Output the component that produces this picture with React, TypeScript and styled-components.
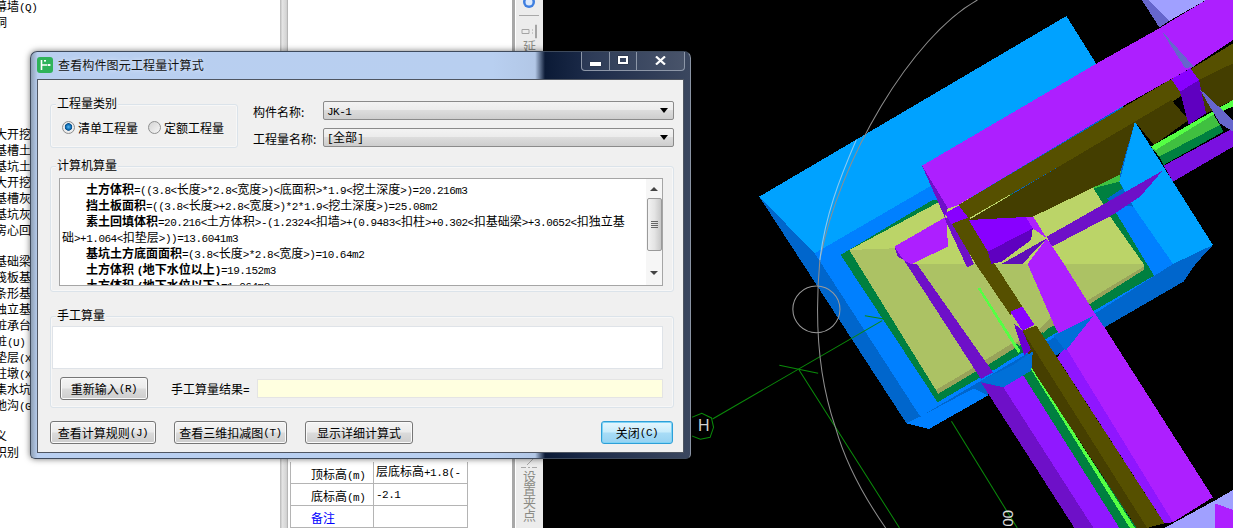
import React from "react";
import styled, { createGlobalStyle } from "styled-components";

const Global = createGlobalStyle`
  html, body { margin: 0; padding: 0; background: #000; overflow: hidden; }
  * { box-sizing: border-box; }
`;

const Page = styled.div`
  position: relative; width: 1233px; height: 528px; display: flex; overflow: hidden; background: #000;
  font-family: "Noto Sans CJK SC", "Liberation Sans", sans-serif; font-size: 12px; color: #000;
`;
const TreePanel = styled.div`
  width: 280px; height: 528px; background: #fff; overflow: hidden; line-height: 16px;
`;
const TreeRow = styled.div<{ $gap?: number }>`
  height: 16px; margin-left: -5px; margin-top: ${p => p.$gap ?? 0}px; white-space: nowrap;
`;
const Splitter = styled.div`
  width: 8px; height: 528px; background: linear-gradient(90deg, #b8b8b8, #e4e4e4 30%, #d4d4d4 80%, #a8a8a8);
`;
const PropPanel = styled.div`
  width: 224px; height: 528px; background: #fff; padding: 462px 0 0 2px; overflow: hidden;
`;
const PropTable = styled.div`
  width: 178px; display: grid; grid-template-columns: 83px 94px; border-left: 1px solid #b4b4b4; border-right: 1px solid #b4b4b4;
`;
const PropName = styled.div<{ $blue?: boolean }>`
  height: 22px; padding: 4px 0 0 20px; border-bottom: 1px solid #b4b4b4; border-right: 1px solid #b4b4b4; white-space: nowrap;
  color: ${p => (p.$blue ? "#0000ff" : "#000")}; line-height: 16px;
`;
const PropValue = styled.div`
  height: 22px; padding: 1px 0 0 2px; border-bottom: 1px solid #b4b4b4; white-space: nowrap; overflow: hidden; line-height: 16px;
`;
const ToolStrip = styled.div`
  width: 31px; height: 528px; background: linear-gradient(90deg, #a8a8a8 0 3px, #fff 3px 4px, #ececec 4px 100%);
  display: flex; flex-direction: column; align-items: center; padding-left: 3px;
`;
const ToolSep = styled.div`
  width: 20px; height: 1px; background: #a8a8a8; margin-top: 5px; margin-bottom: 8px;
`;
const ToolText = styled.div<{ $top?: number }>`
  writing-mode: vertical-rl; color: #8b8b85; font-size: 13px; line-height: 14px; margin-top: ${p => p.$top ?? 0}px;
`;
const Canvas = styled.div`
  flex: 1; height: 528px; background: #000; overflow: hidden;
`;
const CanvasSvg = styled.svg`
  display: block; width: 690px; height: 528px;
`;

const Dialog = styled.div`
  position: absolute; left: 30px; top: 51px; width: 661px; height: 408px; border-radius: 7px 7px 5px 5px;
  border: 1px solid #3e4a5c; border-right-color: #8a94a4;
  background: linear-gradient(90deg, #8fa0b5 0, #b9cff0 1%, #b8cff0 70%, #b2c7e6 76.5%, #0b1a36 78%, #1d2c4a 85%, #3b475f 100%);
  box-shadow: 0 0 6px rgba(0,0,0,.55);
  padding: 0 6px 5px 6px; display: flex; flex-direction: column;
`;
const TitleBar = styled.div`
  height: 27px; display: flex; align-items: flex-start; flex: none;
`;
const TitleIcon = styled.svg`
  width: 16px; height: 16px; margin-top: 5px; flex: none;
`;
const TitleText = styled.div`
  margin: 4px 0 0 5px; line-height: 18px; letter-spacing: .15px; color: #111; text-shadow: 0 0 4px #e8f0ff; white-space: nowrap;
`;
const Caption = styled.div`
  margin-left: auto; margin-right: -1px; display: flex; height: 19px; border: 1px solid #8d97a8; border-top: none; border-radius: 0 0 4px 4px; background: rgba(255,255,255,.08);
`;
const CapBtn = styled.div<{ $w: number; $last?: boolean }>`
  width: ${p => p.$w}px; display: flex; align-items: center; justify-content: center;
  border-right: ${p => (p.$last ? "none" : "1px solid #8d97a8")};
`;
const MinGlyph = styled.div`
  width: 11px; height: 4px; background: #fff; margin-top: 5px; box-shadow: 0 0 1px #000;
`;
const MaxGlyph = styled.div`
  width: 10px; height: 8px; border: 2px solid #fff; margin-top: -2px; box-shadow: 0 0 1px #000;
`;
const CloseGlyph = styled.svg`
  width: 11px; height: 9px; margin-top: -1px;
`;
const Client = styled.div`
  flex: 1; background: #f0f0f0; border: 1px solid #4f5662; padding: 21px 9px 0 12px; display: flex; flex-direction: column;
`;
const TopRow = styled.div`
  display: flex; height: 47px; flex: none;
`;
const TypeGroup = styled.div`
  position: relative; width: 188px; height: 44px; margin-top: 3px; border: 1px solid #dbe3ea; border-radius: 3px;
  display: flex; align-items: center; padding: 3px 0 0 11px; box-shadow: inset 0 0 0 1px #f7f7f7;
`;
const Legend = styled.div`
  position: absolute; left: 5px; top: -10px; background: #f0f0f0; padding: 0 1px; line-height: 16px; white-space: nowrap;
`;
const Radio = styled.span<{ $on?: boolean }>`
  width: 13px; height: 13px; border-radius: 50%; flex: none; border: 1px solid #8e8f8f;
  background: ${p => p.$on
    ? "radial-gradient(circle at 50% 45%, #58b6f0 0, #0f6fb5 30%, #0c4f88 42%, #f0f0f0 50%, #dedede 100%)"
    : "linear-gradient(135deg, #d4d4d4, #f6f6f6)"};
`;
const RadioLabel = styled.span<{ $w: number }>`
  width: ${p => p.$w}px; margin-left: 3px; white-space: nowrap; line-height: 16px;
`;
const FieldCol = styled.div`
  margin-left: 15px; display: flex; flex-direction: column; gap: 8px;
`;
const FieldRow = styled.div`
  display: flex; align-items: center; height: 19px; width: 421px;
`;
const FieldLabel = styled.div`
  width: 70px; white-space: nowrap; margin-top: 2px;
`;
const Select = styled.div`
  width: 351px; height: 19px; border: 1px solid #8a8a8a; border-radius: 2px; padding-left: 3px; line-height: 17px;
  display: flex; justify-content: space-between; align-items: center;
  background: linear-gradient(180deg, #f3f3f3 0, #ececec 45%, #dcdcdc 50%, #cdcdcd 100%);
`;
const Arrow = styled.span`
  width: 0; height: 0; border-left: 4px solid transparent; border-right: 4px solid transparent; border-top: 5px solid #000; margin-right: 5px;
`;
const Group = styled.div<{ $h: number; $top: number; $px: number; $pt: number }>`
  position: relative; width: 624px; height: ${p => p.$h}px; margin-top: ${p => p.$top}px; flex: none;
  border: 1px solid #dbe3ea; border-radius: 3px; padding: ${p => p.$pt}px 10px 0 ${p => p.$px}px; box-shadow: inset 0 0 0 1px #f7f7f7;
`;
const Formula = styled.div`
  position: relative; width: 604px; height: 108px; background: #fff; border: 1px solid #a5a5a5; overflow: hidden; line-height: 16px;
  padding: 2px 0 0 2px;
`;
const FLine = styled.div<{ $indent?: boolean }>`
  height: 16px; white-space: nowrap; padding-left: ${p => (p.$indent ? 24 : 0)}px;
`;
const Strong = styled.span`
  font-weight: 700;
`;
const Lat = styled.span`
  font-family: "Liberation Mono", monospace; font-size: 11px; letter-spacing: -0.5px;
`;
const Bar = styled.div`
  position: absolute; right: 0; top: 0; bottom: 0; width: 16px; background: #f6f6f6; display: flex; flex-direction: column; align-items: center;
`;
const BarUp = styled.span`
  margin-top: 8px; width: 0; height: 0; border-left: 4px solid transparent; border-right: 4px solid transparent; border-bottom: 4px solid #444;
`;
const BarDown = styled.span`
  margin-top: 20px; width: 0; height: 0; border-left: 4px solid transparent; border-right: 4px solid transparent; border-top: 4px solid #444;
`;
const Thumb = styled.div`
  width: 15px; height: 53px; margin-top: 7px; border: 1px solid #9a9a9a; border-radius: 2px; display: flex; flex-direction: column; align-items: center; justify-content: center; gap: 1px;
  background: linear-gradient(90deg, #f2f2f2, #e4e4e4 50%, #c8c8c8);
`;
const Grip = styled.span`
  width: 7px; height: 1px; background: #666;
`;
const ManualBox = styled.div`
  width: 611px; height: 43px; background: #fff; border: 1px solid #dfe3e8;
`;
const ManualRow = styled.div`
  display: flex; align-items: center; margin: 8px 0 0 8px;
`;
const Btn = styled.div<{ $w: number; $primary?: boolean; $ml?: number }>`
  width: ${p => p.$w}px; height: 23px; flex: none; margin-left: ${p => p.$ml ?? 0}px; border-radius: 3px;
  display: flex; align-items: center; justify-content: center; white-space: nowrap; line-height: 16px;
  border: 1px solid ${p => (p.$primary ? "#2e9fd8" : "#767676")};
  background: ${p => p.$primary
    ? "linear-gradient(180deg, #e6f6fd 0, #c8ecfb 48%, #a8dcf6 52%, #96d2f2 100%)"
    : "linear-gradient(180deg, #f4f4f4 0, #ebebeb 48%, #dbdbdb 52%, #cdcdcd 100%)"};
  box-shadow: inset 0 0 0 1px ${p => (p.$primary ? "#7fd3f5" : "#fafafa")};
`;
const ResultLabel = styled.div`
  margin-left: 23px; width: 86px; white-space: nowrap;
`;
const ResultInput = styled.div`
  width: 406px; height: 19px; background: #ffffe0; border: 1px solid #e4e4e4;
`;
const BottomRow = styled.div`
  display: flex; margin-top: 13px; flex: none;
`;

const Mixed = ({ text }: { text: string }) => (
  <>
    {text.split(/([\x00-\x7f]+)/).filter(Boolean).map((s, i) =>
      /^[\x00-\x7f]+$/.test(s) ? <Lat key={i}>{s}</Lat> : <React.Fragment key={i}>{s}</React.Fragment>
    )}
  </>
);

const tree: [string, number][] = [
  ["幕墙(Q)", -2], ["洞", 0],
  ["大开挖", 96], ["基槽土", 0], ["基坑土", 0], ["大开挖", 0], ["基槽灰", 0], ["基坑灰", 0], ["房心回", 0],
  ["基础梁", 15], ["筏板基", 0], ["条形基", 0], ["独立基", 0], ["桩承台", 0], ["桩(U)", 0], ["垫层(X)", 0], ["柱墩(X)", 0], ["集水坑", 0], ["地沟(G)", 0],
  ["义", 15], ["识别", 0],
];

const O = 792;
const shapes: [string, string][] = [
  ["#0066cc", `200,590 1087,48 1250,320 1285,365 1510,735 1460,${O} 1425,${O + 53} 690,${O + 495} 625,${O + 478}`],
  ["#0080ff", `360,760 700,555 1280,620 1395,${O} 1170,${O + 148} 665,${O + 458}`],
  ["#0080ff", `625,${O + 478} 690,${O + 495} 860,${O + 395} 820,${O + 373} 665,${O + 458}`],
  ["#00a2ff", `200,590 1087,48 1250,320 1180,360 700,555 360,760`],
  ["#00a2ff", `1285,365 1510,735 1395,${O} 1280,620 1240,545`],
  ["#008040", `435,765 715,${O + 415} 1340,${O + 35} 1205,595 1250,565 1240,545 1165,565 700,600`],
  ["#40c040", `1000,648 1245,505 1240,545 1165,565 1020,640`],
  ["#55ff44", `990,650 1245,495 1245,505 1000,652`],
  ["#bbd468", `460,750 730,600 1165,565 1195,615 1210,645 1310,${O} 1310,${O + 8} 1150,${O + 108} 710,${O + 378}`],
  ["#acc264", `460,750 590,745 640,${O} 1310,${O} 1310,${O + 8} 1150,${O + 108} 710,${O + 378}`],
  ["#98a35a", `710,${O + 378} 716,${O + 390} 1150,${O + 123} 1310,${O + 18} 1310,${O + 8} 1150,${O + 108}`],
  ["#008040", `845,${O + 298} 945,${O + 238} 960,${O + 262} 880,${O + 318}`],
  ["#98a35a", `850,${O + 290} 860,${O + 303} 945,${O + 248} 935,${O + 235}`],
  ["#98a35a", `1010,${O + 193} 1020,${O + 208} 1050,${O + 173} 1050,${O + 155}`],
  ["#55ff44", `830,${O + 72} 838,${O + 72} 955,${O + 262} 948,${O + 268}`],
  ["#6e10c8", `625,${O} 655,${O} 875,${O + 325} 840,${O + 345}`],
  ["#ad1fff", `590,740 740,650 745,740 640,${O} 625,${O}`],
  ["#6e10c8", `590,740 625,${O} 650,${O + 8} 600,770`],
  ["#6e10c8", `735,655 760,650 820,${O} 800,${O + 10}`],
  ["#565000", `755,670 805,650 880,${O} 960,${O + 128} 925,${O + 153} 825,${O}`],
  ["#8800ff", `735,640 785,612 810,650 755,672`],
  ["#8800ff", `805,660 935,592 990,685 860,755`],
  ["#5f00c0", `860,755 990,685 985,720 900,785 870,${O}`],
  ["#ad1fff", `935,592 945,572 1030,715 990,685`],
  ["#6e10c8", `1030,710 1365,512 1300,590 1220,645 1045,740`],
  ["#5f10b8", `900,${O} 1030,715 960,${O}`],
  ["#6e10c8", `840,${O + 355} 905,${O + 370} 1165,${O + 792} 1110,${O + 792}`],
  ["#9018ff", `905,${O + 370} 985,${O + 320} 1240,${O + 792} 1165,${O + 792}`],
  ["#008040", `960,${O + 330} 985,${O + 313} 1290,${O + 792} 1240,${O + 792}`],
  ["#55ff44", `980,${O + 308} 990,${O + 313} 1285,${O + 792} 1270,${O + 792}`],
  ["#463f00", `960,${O + 200} 990,${O + 318} 1290,${O + 792} 1320,${O + 792}`],
  ["#565000", `960,${O + 200} 1000,${O + 185} 1370,${O + 778} 1320,${O + 792}`],
  ["#8f16ff", `1060,${O + 280} 1085,${O + 250} 1395,${O + 775} 1370,${O + 778}`],
  ["#ad1fff", `975,${O} 1030,715 1080,${O} 1170,${O + 150} 1200,${O + 195} 1510,${O + 700} 1395,${O + 775} 1085,${O + 250} 1050,${O + 180}`],
  ["#0070d8", `835,${O + 352} 905,${O + 370} 985,${O + 320} 990,${O + 262} 930,${O + 305}`],
  ["#0070d8", `1050,${O + 215} 1085,${O + 260} 1165,${O + 155}`],
  ["#8800ff", `925,${O + 143} 960,${O + 128} 995,${O + 183} 960,${O + 200}`],
  ["#6a00d0", `935,${O + 178} 965,${O + 273} 985,${O + 258} 960,${O + 200}`],
  ["#ad1fff", `670,497 1175,190 1355,85 1490,0 1568,0 1568,120 1445,205 1385,240 1250,318 775,615 745,625`],
  ["#6e10c8", `670,497 745,625 735,650`],
  ["#565000", `775,615 1385,240 1450,205 1568,130 1568,190 1480,245 1400,300 805,655`],
  ["#443e00", `805,660 1390,300 1440,360 1340,435 1285,365 1250,490 1240,525 990,650`],
  ["#443e00", `1470,240 1568,190 1568,300 1490,340`],
  ["#8800ff", `1390,238 1445,205 1470,240 1415,275`],
  ["#5f00c0", `1415,275 1470,240 1490,340 1440,375`],
  ["#40c040", `1335,445 1510,340 1530,375 1355,470`],
  ["#55ff44", `1330,440 1500,340 1568,300 1568,320 1510,345 1345,450`],
  ["#008040", `1355,470 1530,375 1540,395 1368,495`],
  ["#7a10e0", `1368,497 1568,385 1568,440 1395,545`],
  ["#6666cc", `1360,90 1455,200 1430,205`],
  ["#6666cc", `1470,265 1568,360 1568,395 1530,370`],
  ["#6666cc", `1305,0 1325,0 1385,62 1355,82`],
  ["#a0a0ff", `1325,0 1490,0 1385,62`],
  ["#a0a0ff", `1370,${O + 792} 1515,${O + 710} 1568,${O + 678} 1568,${O + 792}`],
  ["#ad1fff", `1515,${O + 718} 1568,${O + 738} 1568,${O + 792} 1515,${O + 792}`],
];

const lines = (
  <g fill="none">
    <path d={`M65 ${O + 465} L555 ${O + 170}`} stroke="#0a8a0a" strokeWidth="3" />
    <path d={`M258 ${O + 304} L370 ${O + 328} M505 ${O + 155} L560 ${O + 165} M315 ${O + 318} L605 ${O + 792}`} stroke="#0a8a0a" strokeWidth="3" />
    <path d={`M755 ${O + 472} L945 ${O + 792}`} stroke="#0a8a0a" strokeWidth="3" />
    <path d={`M6 ${O + 460} L34 ${O + 448} L62 ${O + 462} L68 ${O + 490} L58 ${O + 520} L30 ${O + 526} L6 ${O + 516}`} stroke="#0a8a0a" strokeWidth="3" />
    <ellipse cx="365" cy={O + 136} rx="68" ry="70" stroke="#9a9a9a" strokeWidth="3" />
    <path d={`M830 0 C 640 110 430 480 375 ${O - 12} C 360 ${O + 160} 370 ${O + 340} 420 ${O + 490} C 450 ${O + 600} 510 ${O + 710} 565 ${O + 792}`} stroke="#8e8e8e" strokeWidth="3" />
    <path d={`M480 420 C 430 540 390 650 375 ${O - 12}`} stroke="#8cc8f0" strokeWidth="3" />
  </g>
);

export default function App() {
  return (
    <Page>
      <Global />
      <TreePanel>
        {tree.map(([t, g], i) => (
          <TreeRow key={i} $gap={g}><Mixed text={t} /></TreeRow>
        ))}
      </TreePanel>
      <Splitter />
      <PropPanel>
        <PropTable>
          <PropName><Mixed text="顶标高(m)" /></PropName>
          <PropValue><Mixed text="层底标高+1.8(-" /></PropValue>
          <PropName><Mixed text="底标高(m)" /></PropName>
          <PropValue><Mixed text="-2.1" /></PropValue>
          <PropName $blue>备注</PropName>
          <PropValue />
        </PropTable>
      </PropPanel>
      <ToolStrip>
        <svg width="14" height="10" viewBox="0 0 14 10">
          <circle cx="7" cy="2" r="6" fill="#3f7fe0" />
          <circle cx="7" cy="2" r="3.5" fill="#dce9fb" />
        </svg>
        <ToolSep />
        <svg width="16" height="15" viewBox="0 0 16 15" fill="none" stroke="#a4a4a4">
          <path d="M1 5.5H8V9.5H1ZM11 6H12M11 9H12M14.5 1H15.5V14H14.5Z" />
        </svg>
        <ToolText $top={1}>延</ToolText>
        <svg width="18" height="12" viewBox="0 0 18 12" style={{ marginTop: 404 }} fill="none" stroke="#a8a8a8">
          <path d="M7 8L14 1M1 10.5H6M8 10.5H10M12 10.5H17" />
        </svg>
        <ToolText $top={1}>设置夹点</ToolText>
      </ToolStrip>
      <Canvas>
        <CanvasSvg viewBox="0 0 690 528" shapeRendering="crispEdges">
          <g transform="translate(147,0) scale(0.3463,0.3333)">
            {shapes.map(([c, p], i) => <polygon key={i} fill={c} points={p} />)}
            {lines}
          </g>
          <text x="155" y="431" fill="#d0d0d0" fontFamily="Liberation Sans, sans-serif" fontSize="16" shapeRendering="auto">H</text>
          <text transform="translate(460,510) rotate(90)" fill="#e0e0e0" fontFamily="Liberation Sans, sans-serif" fontSize="15">00</text>
        </CanvasSvg>
      </Canvas>

      <Dialog>
        <TitleBar>
          <TitleIcon viewBox="0 0 16 16">
            <rect width="16" height="16" rx="3" fill="#2fb35a" />
            <path d="M4.5 3V13M4.5 8H10.5" stroke="#fff" strokeWidth="1.6" fill="none" />
            <rect x="11" y="7" width="2.4" height="2" fill="#fff" />
            <rect x="7" y="3" width="2" height="1.6" fill="#fff" />
          </TitleIcon>
          <TitleText>查看构件图元工程量计算式</TitleText>
          <Caption>
            <CapBtn $w={28}><MinGlyph /></CapBtn>
            <CapBtn $w={27}><MaxGlyph /></CapBtn>
            <CapBtn $w={47} $last>
              <CloseGlyph viewBox="0 0 11 9"><path d="M1 0.5L10 8.5M10 0.5L1 8.5" stroke="#fff" strokeWidth="2.2" /></CloseGlyph>
            </CapBtn>
          </Caption>
        </TitleBar>
        <Client>
          <TopRow>
            <TypeGroup>
              <Legend>工程量类别</Legend>
              <Radio $on />
              <RadioLabel $w={70}>清单工程量</RadioLabel>
              <Radio />
              <RadioLabel $w={62}>定额工程量</RadioLabel>
            </TypeGroup>
            <FieldCol>
              <FieldRow>
                <FieldLabel>构件名称:</FieldLabel>
                <Select><span><Mixed text="JK-1" /></span><Arrow /></Select>
              </FieldRow>
              <FieldRow>
                <FieldLabel>工程量名称:</FieldLabel>
                <Select><span><Mixed text="[" />全部<Mixed text="]" /></span><Arrow /></Select>
              </FieldRow>
            </FieldCol>
          </TopRow>

          <Group $h={126} $top={18} $px={8} $pt={11}>
            <Legend>计算机算量</Legend>
            <Formula>
              <FLine $indent><Strong>土方体积</Strong><Mixed text="=((3.8<长度>*2.8<宽度>)<底面积>*1.9<挖土深度>)=20.216m3" /></FLine>
              <FLine $indent><Strong>挡土板面积</Strong><Mixed text="=((3.8<长度>+2.8<宽度>)*2*1.9<挖土深度>)=25.08m2" /></FLine>
              <FLine $indent><Strong>素土回填体积</Strong><Mixed text="=20.216<土方体积>-(1.2324<扣墙>+(0.9483<扣柱>+0.302<扣基础梁>+3.0652<扣独立基" /></FLine>
              <FLine><Mixed text="础>+1.064<扣垫层>))=13.6041m3" /></FLine>
              <FLine $indent><Strong>基坑土方底面面积</Strong><Mixed text="=(3.8<长度>*2.8<宽度>)=10.64m2" /></FLine>
              <FLine $indent><Strong>土方体积 <Mixed text="(" />地下水位以上<Mixed text=")" /></Strong><Mixed text="=19.152m3" /></FLine>
              <FLine $indent><Strong>土方体积 <Mixed text="(" />地下水位以下<Mixed text=")" /></Strong><Mixed text="=1.064m3" /></FLine>
              <Bar>
                <BarUp />
                <Thumb><Grip /><Grip /><Grip /><Grip /></Thumb>
                <BarDown />
              </Bar>
            </Formula>
          </Group>

          <Group $h={92} $top={24} $px={1} $pt={9}>
            <Legend>手工算量</Legend>
            <ManualBox />
            <ManualRow>
              <Btn $w={88}>重新输入<Mixed text=" (R)" /></Btn>
              <ResultLabel>手工算量结果<Mixed text="=" /></ResultLabel>
              <ResultInput />
            </ManualRow>
          </Group>

          <BottomRow>
            <Btn $w={106}>查看计算规则<Mixed text=" (J)" /></Btn>
            <Btn $w={113} $ml={18}>查看三维扣减图<Mixed text=" (T)" /></Btn>
            <Btn $w={108} $ml={18}>显示详细计算式</Btn>
            <Btn $w={72} $ml={188} $primary>关闭<Mixed text=" (C)" /></Btn>
          </BottomRow>
        </Client>
      </Dialog>
    </Page>
  );
}
